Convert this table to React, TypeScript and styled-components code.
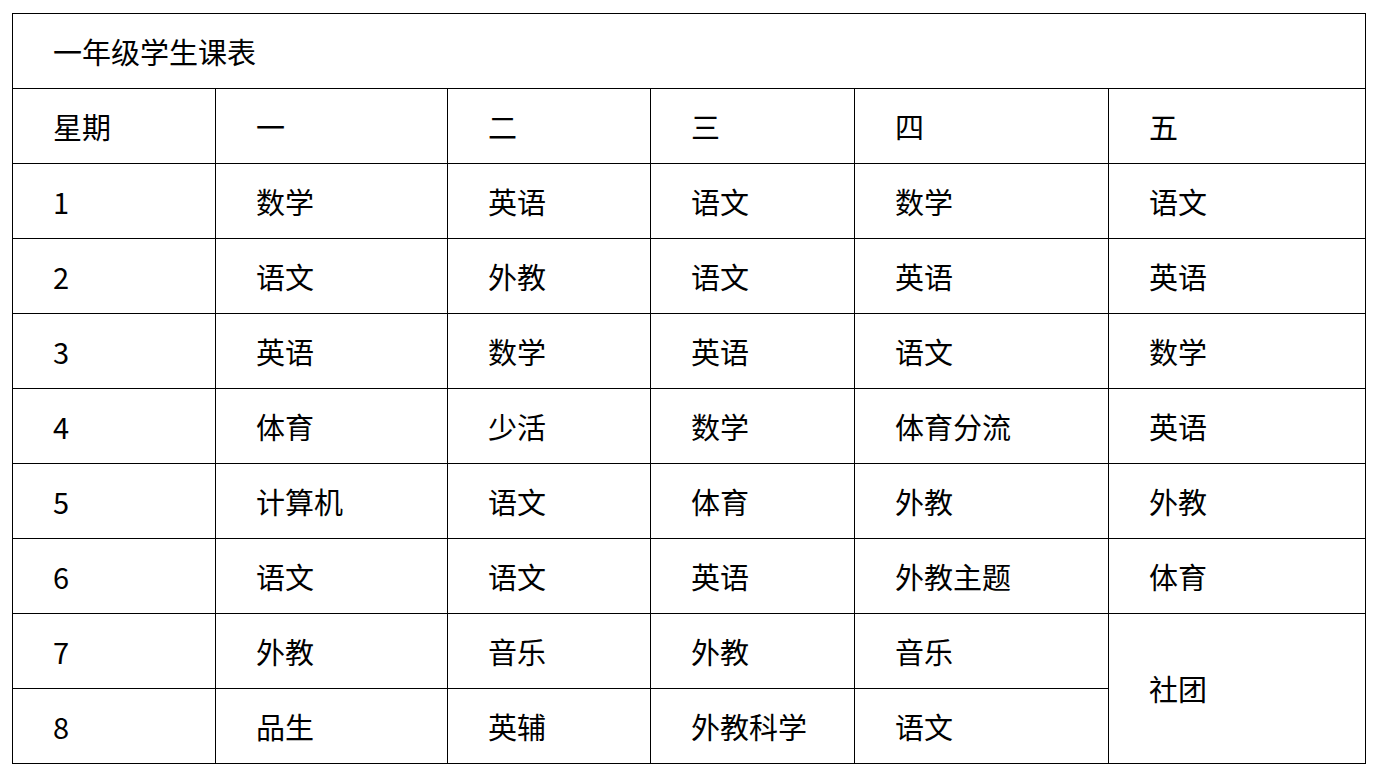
import * as React from "react";
import styled, { createGlobalStyle } from "styled-components";

const GlobalStyle = createGlobalStyle`
  body {
    margin: 0;
    padding: 13px 0 0 12px;
    background: #ffffff;
    font-family: "Noto Sans CJK SC", "Liberation Sans", sans-serif;
    color: #000000;
  }
`;

const Table = styled.table`
  width: 1353px;
  border-collapse: collapse;
  table-layout: fixed;
`;

const Row = styled.tr`
  height: 75px;
`;

const Cell = styled.td`
  border: 1px solid #000;
  padding: 0 0 0 40px;
  font-size: 29px;
  line-height: 1;
  vertical-align: middle;
  text-align: left;
  font-weight: 400;
  white-space: nowrap;
`;

const widths = [203, 232, 203, 204, 254, 257];
const head = ["星期", "一", "二", "三", "四", "五"];

const rows: string[][] = [
  ["1", "数学", "英语", "语文", "数学", "语文"],
  ["2", "语文", "外教", "语文", "英语", "英语"],
  ["3", "英语", "数学", "英语", "语文", "数学"],
  ["4", "体育", "少活", "数学", "体育分流", "英语"],
  ["5", "计算机", "语文", "体育", "外教", "外教"],
  ["6", "语文", "语文", "英语", "外教主题", "体育"],
  ["7", "外教", "音乐", "外教", "音乐"],
  ["8", "品生", "英辅", "外教科学", "语文"],
];

const App: React.FC = () => {
  return (
    <>
      <GlobalStyle />
      <Table>
        <colgroup>
          {widths.map((w, i) => (
            <col key={i} style={{ width: w }} />
          ))}
        </colgroup>
        <tbody>
          <Row>
            <Cell colSpan={6}>一年级学生课表</Cell>
          </Row>
          <Row>
            {head.map((h) => (
              <Cell key={h}>{h}</Cell>
            ))}
          </Row>
          {rows.map((r, i) => (
            <Row key={i}>
              {r.map((c, j) => (
                <Cell key={j}>{c}</Cell>
              ))}
              {i === 6 && <Cell rowSpan={2}>社团</Cell>}
            </Row>
          ))}
        </tbody>
      </Table>
    </>
  );
};

export default App;
